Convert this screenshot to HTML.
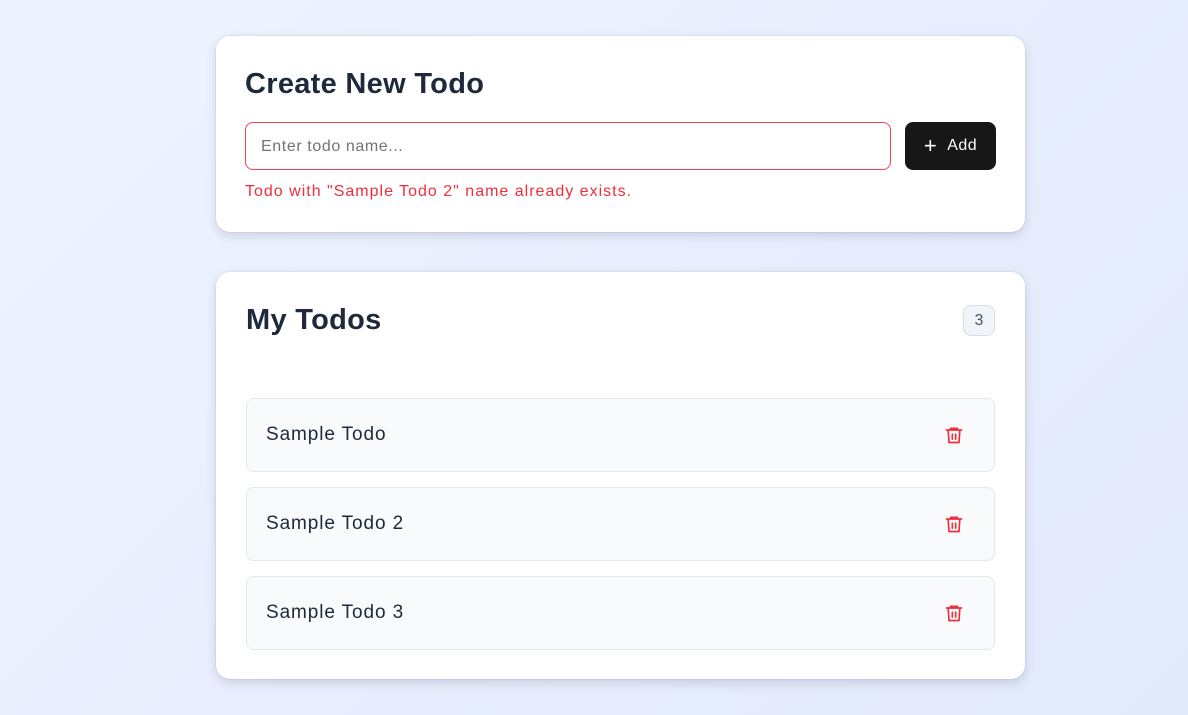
<!DOCTYPE html><html><head><style>
*{box-sizing:border-box;margin:0;padding:0}
body{width:1188px;height:715px;overflow:hidden;background:linear-gradient(135deg,#eef3ff,#e2e9fb);font-family:"Liberation Sans",sans-serif;position:relative}
.card{position:absolute;left:216px;width:809px;background:#fff;border-radius:14px;box-shadow:0 4px 10px rgba(30,40,80,.15),0 0 0 1px rgba(0,0,0,.04)}
h2{position:absolute;color:#1e293b;font-weight:700;letter-spacing:0.3px}
.inp{position:absolute;left:29px;top:86px;width:646px;height:48px;border:1px solid #f0414f;border-radius:8px;color:#737373;font-size:16px;padding:15px 15px;letter-spacing:0.6px}
.btn{position:absolute;left:689px;top:86px;width:91px;height:48px;background:#171717;border-radius:8px;color:#fff;font-size:16px;font-weight:normal;display:flex;align-items:center;justify-content:center;gap:10px;letter-spacing:0.5px}
.err{position:absolute;left:29px;top:147px;color:#ef2e3e;font-size:16px;letter-spacing:1px}
.badge{position:absolute;left:747px;top:33px;width:32px;height:31px;border:1px solid #d9dde3;background:#f1f5f9;border-radius:8px;color:#475569;font-size:16px;text-align:center;line-height:29px}
.item{position:absolute;left:30px;width:749px;height:74px;background:#f8fafc;border:1px solid #e2e8f0;border-radius:8px;font-size:19px;color:#1e293b;padding:25px 19px;letter-spacing:0.9px}
.item svg{position:absolute;left:697px;top:26px}
</style></head><body>
<div class="card" style="top:36px;height:196px">
<h2 style="left:29px;top:32px;font-size:29px">Create New Todo</h2>
<div class="inp">Enter todo name...</div>
<div class="btn"><span style="font-size:22px;font-weight:300">+</span>Add</div>
<div class="err">Todo with "Sample Todo 2" name already exists.</div>
</div>
<div class="card" style="top:272px;height:407px">
<h2 style="left:30px;top:32px;font-size:29px">My Todos</h2>
<div class="badge">3</div>
<div class="item" style="top:126px">Sample Todo<svg width="20" height="20" viewBox="0 0 24 24" fill="none" stroke="#ef2e3e" stroke-width="2" stroke-linecap="round"><path d="M3 6h18M8 6V4h8v2M5 6l1 15h12l1-15M10 11v6M14 11v6"/></svg></div>
<div class="item" style="top:215px">Sample Todo 2<svg width="20" height="20" viewBox="0 0 24 24" fill="none" stroke="#ef2e3e" stroke-width="2" stroke-linecap="round"><path d="M3 6h18M8 6V4h8v2M5 6l1 15h12l1-15M10 11v6M14 11v6"/></svg></div>
<div class="item" style="top:304px">Sample Todo 3<svg width="20" height="20" viewBox="0 0 24 24" fill="none" stroke="#ef2e3e" stroke-width="2" stroke-linecap="round"><path d="M3 6h18M8 6V4h8v2M5 6l1 15h12l1-15M10 11v6M14 11v6"/></svg></div>
</div>
</body></html>
